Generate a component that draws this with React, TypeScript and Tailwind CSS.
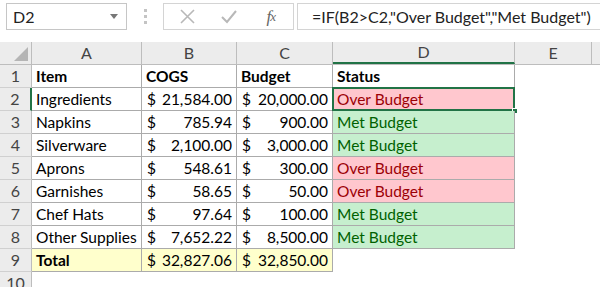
import React from 'react';

const font = { fontFamily: 'Lato, "Liberation Sans", sans-serif' };

type Row = {
  item: string;
  cogs: string;
  budget: string;
  status?: 'over' | 'met';
};

const rows: Row[] = [
  { item: 'Ingredients', cogs: '21,584.00', budget: '20,000.00', status: 'over' },
  { item: 'Napkins', cogs: '785.94', budget: '900.00', status: 'met' },
  { item: 'Silverware', cogs: '2,100.00', budget: '3,000.00', status: 'met' },
  { item: 'Aprons', cogs: '548.61', budget: '300.00', status: 'over' },
  { item: 'Garnishes', cogs: '58.65', budget: '50.00', status: 'over' },
  { item: 'Chef Hats', cogs: '97.64', budget: '100.00', status: 'met' },
  { item: 'Other Supplies', cogs: '7,652.22', budget: '8,500.00', status: 'met' },
];

const RowHead = ({ n, active }: { n: number; active?: boolean }) => (
  <div
    className={`w-[32px] shrink-0 flex items-center justify-center bg-[#ececec] text-[#444] text-[16px] border-b border-[#d0d0d0] ${
      active ? 'border-r-2 border-r-[#217346]' : 'border-r border-r-[#bdbdbd]'
    }`}
  >
    {n}
  </div>
);

const Money = ({ value, bg }: { value: string; bg?: string }) => (
  <div className={`flex justify-between pl-[5px] pr-[4px] pt-[1px] items-center border-r border-b border-[#ababab] ${bg ?? 'bg-white'}`}>
    <span>$</span>
    <span>{value}</span>
  </div>
);

export default function App() {
  return (
    <div className="w-[600px] h-[287px] overflow-hidden bg-white text-[15.5px] text-black select-none" style={font}>
      {/* formula bar */}
      <div className="h-[42px] flex items-start pt-[3px] pl-[6px]">
        <div className="w-[121px] h-[27px] border border-[#c6c6c6] bg-white flex items-center justify-between pl-[6px] pr-[8px]">
          <span className="text-[16px] text-[#222]">D2</span>
          <svg width="8" height="5" viewBox="0 0 8 5">
            <path d="M0 0 L8 0 L4 5 Z" fill="#777" />
          </svg>
        </div>
        <div className="w-[36px] h-[27px] flex flex-col items-center justify-center gap-[3px]">
          <span className="w-[3px] h-[3px] bg-[#c4c4c4]" />
          <span className="w-[3px] h-[3px] bg-[#c4c4c4]" />
          <span className="w-[3px] h-[3px] bg-[#c4c4c4]" />
        </div>
        <div className="w-[131px] h-[27px] border border-[#d4d4d4] bg-white flex items-center">
          <div className="w-[44px] flex justify-center pl-[4px]">
            <svg width="15" height="15" viewBox="0 0 15 15">
              <path d="M1 1 L14 14 M14 1 L1 14" stroke="#b8b8b8" strokeWidth="1.6" />
            </svg>
          </div>
          <div className="w-[42px] flex justify-center">
            <svg width="16" height="14" viewBox="0 0 16 14">
              <path d="M1 7 L6 12 L15 1" stroke="#b8b8b8" strokeWidth="2" fill="none" />
            </svg>
          </div>
          <div className="w-[44px] flex justify-center text-[#666] italic text-[17px]" style={{ fontFamily: '"Liberation Serif", serif' }}>
            f<span className="text-[13px] -ml-[1px] mt-[3px]">x</span>
          </div>
        </div>
        <div className="flex-1 h-[27px] ml-[3px] border border-[#d4d4d4] border-r-0 bg-white flex items-center pl-[14px] text-[16px] text-[#222] whitespace-nowrap">
          =IF(B2&gt;C2,"Over Budget","Met Budget")
        </div>
      </div>

      {/* column headers */}
      <div className="flex h-[23px] bg-[#ececec] text-[#444] text-[16px] border-b border-[#bdbdbd]">
        <div className="w-[32px] shrink-0 border-r border-[#bdbdbd] relative">
          <svg className="absolute right-[3px] bottom-[3px]" width="14" height="14" viewBox="0 0 14 14">
            <path d="M14 0 L14 14 L0 14 Z" fill="#b5b5b5" />
          </svg>
        </div>
        <div className="w-[110px] shrink-0 border-r border-[#bdbdbd] flex items-center justify-center">A</div>
        <div className="w-[95px] shrink-0 border-r border-[#bdbdbd] flex items-center justify-center">B</div>
        <div className="w-[96px] shrink-0 border-r border-[#bdbdbd] flex items-center justify-center">C</div>
        <div className="w-[182px] shrink-0 border-r border-[#bdbdbd] border-b-2 border-b-[#217346] flex items-center justify-center">D</div>
        <div className="w-[77px] shrink-0 border-r border-[#bdbdbd] flex items-center justify-center">E</div>
        <div className="flex-1" />
      </div>

      {/* grid */}
      <div className="grid grid-cols-[32px_110px_95px_96px_182px_1fr] auto-rows-[23px]">
        <RowHead n={1} />
        <div className="font-bold px-[4px] pt-[1px] flex items-center border-r border-b border-[#ababab]">Item</div>
        <div className="font-bold px-[4px] pt-[1px] flex items-center border-r border-b border-[#ababab]">COGS</div>
        <div className="font-bold px-[4px] pt-[1px] flex items-center border-r border-b border-[#ababab]">Budget</div>
        <div className="font-bold px-[4px] pt-[1px] flex items-center border-r border-b border-[#ababab]">Status</div>
        <div />

        {rows.map((r, i) => {
          const over = r.status === 'over';
          const selected = i === 0;
          return (
            <React.Fragment key={r.item}>
              <RowHead n={i + 2} active={selected} />
              <div className="px-[4px] pt-[1px] flex items-center border-r border-b border-[#ababab] whitespace-nowrap">{r.item}</div>
              <Money value={r.cogs} />
              <Money value={r.budget} />
              <div
                className={`relative px-[4px] pt-[1px] flex items-center border-r border-b border-[#ababab] ${
                  over ? 'bg-[#ffc7ce] text-[#9c0006]' : 'bg-[#c6efce] text-[#006100]'
                }`}
              >
                {r.status === 'over' ? 'Over Budget' : 'Met Budget'}
                {selected && (
                  <>
                    <div className="absolute -left-[1px] -top-[1px] -right-[1px] -bottom-[1px] border-2 border-[#217346] pointer-events-none" />
                    <div className="absolute -right-[4px] -bottom-[4px] w-[6px] h-[6px] bg-[#217346] border border-white" />
                  </>
                )}
              </div>
              <div />
            </React.Fragment>
          );
        })}

        <RowHead n={9} />
        <div className="font-bold px-[4px] pt-[1px] flex items-center border-r border-b border-[#ababab] bg-[#ffffcc]">Total</div>
        <Money value="32,827.06" bg="bg-[#ffffcc]" />
        <Money value="32,850.00" bg="bg-[#ffffcc]" />
        <div />
        <div />

        <RowHead n={10} />
        <div />
        <div />
        <div />
        <div />
        <div />
      </div>
    </div>
  );
}
